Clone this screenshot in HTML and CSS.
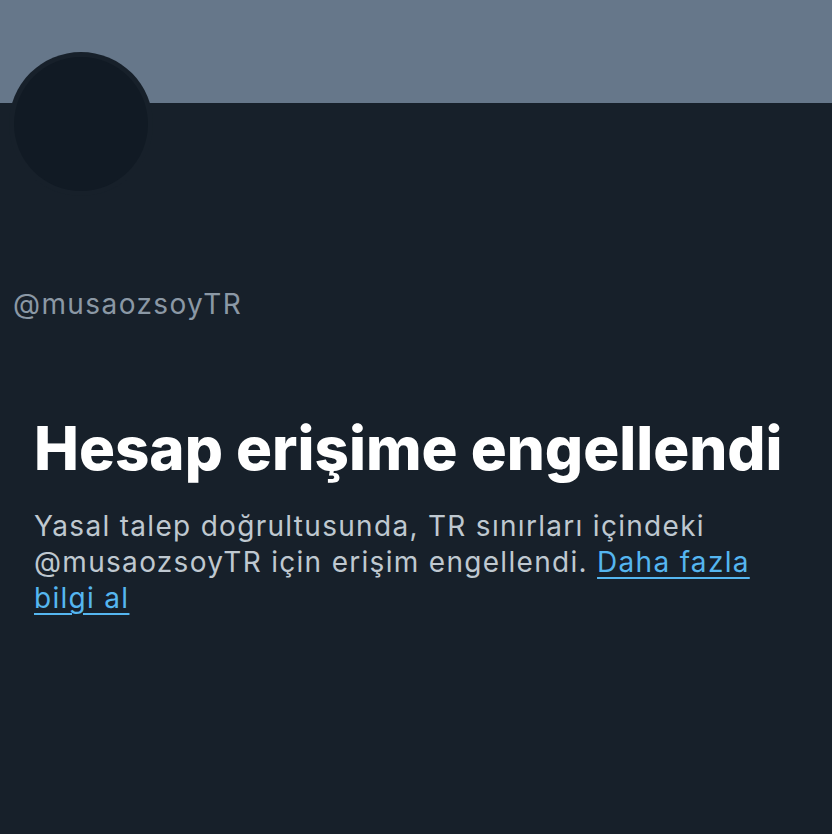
FILE: index.html
```html
<!DOCTYPE html>
<html lang="tr">
<head>
<meta charset="utf-8">
<link rel="stylesheet" href="styles.css">
</head>
<body>
<div class="banner"></div>
<div class="profile">
  <div class="avatar"><div class="avatar-inner"></div></div>
  <div class="handle">@musaozsoyTR</div>
</div>
<div class="notice">
  <h1 class="title">Hesap erişime engellendi</h1>
  <p class="desc">Yasal talep doğrultusunda, TR sınırları içindeki @musaozsoyTR için erişim engellendi. <a class="link" href="#">Daha fazla bilgi al</a></p>
</div>
</body>
</html>
```
FILE: styles.css
```css
html, body {
  margin: 0;
  padding: 0;
  background: #17202a;
  height: 100%;
  overflow: hidden;
}
body {
  font-family: Inter, "Noto Sans", "Liberation Sans", sans-serif;
}
.banner {
  height: 103px;
  background: #66778a;
}
.profile {
  padding-left: 9px;
  margin-top: -51px;
}
.avatar {
  width: 144px;
  height: 144px;
  border-radius: 50%;
  background: #17202a;
  display: flex;
  align-items: center;
  justify-content: center;
}
.avatar-inner {
  width: 134px;
  height: 134px;
  border-radius: 50%;
  background: #111a24;
}
.handle {
  margin-top: 92px;
  padding-left: 4px;
  font-size: 28px;
  line-height: 32px;
  color: #8b98a5;
  letter-spacing: 1.4px;
}
.notice {
  padding: 92px 42px 0 34px;
}
.title {
  margin: 0;
  font-size: 60px;
  font-weight: 800;
  line-height: 72px;
  color: #ffffff;
}
.desc {
  margin: 24px 0 0;
  font-size: 28px;
  line-height: 36px;
  color: #bfc8d0;
  letter-spacing: 1.3px;
}
.link {
  color: #55b6f0;
  text-decoration: underline;
  text-underline-offset: 5px;
  text-decoration-thickness: 2px;
}
```
